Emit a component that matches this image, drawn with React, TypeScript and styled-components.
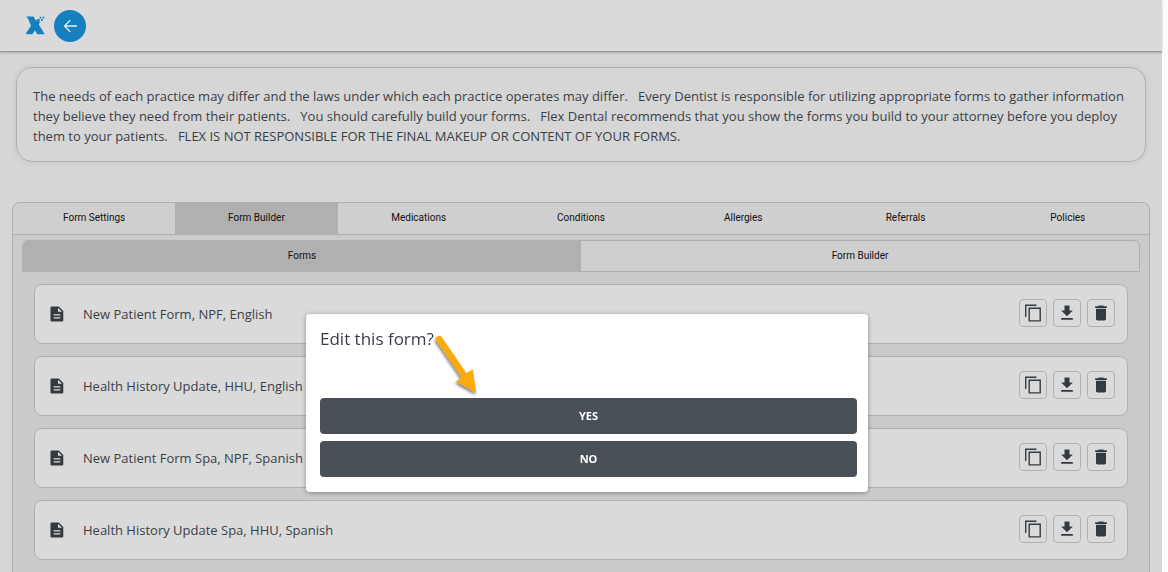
import React from "react";
import styled, { createGlobalStyle } from "styled-components";
import { MdDelete, MdDownload } from "react-icons/md";

const textFont = '"Segoe UI", "Open Sans", "Noto Sans", sans-serif';

const GlobalStyle = createGlobalStyle`
  *, *::before, *::after { box-sizing: border-box; }
  body {
    margin: 0;
    background: #fbfbfb;
    color: #3a3f47;
    font-family: ${textFont};
  }
  button { font: inherit; color: inherit; cursor: pointer; }
`;

const Page = styled.div`
  display: flex;
  flex-direction: column;
  min-height: 100vh;
  margin-right: 6px;
  background: #d6d6d6;
`;

const Header = styled.header`
  display: flex;
  align-items: center;
  gap: 9px;
  height: 52px;
  padding-left: 26px;
  background: #dadada;
  border-bottom: 1px solid #999999;
  box-shadow: 0 1px 2px rgba(0, 0, 0, 0.2);
`;

const BackButton = styled.button`
  display: grid;
  place-items: center;
  width: 32px;
  height: 32px;
  padding: 0;
  border: 0;
  border-radius: 50%;
  background: #1480bf;
`;

const Disclaimer = styled.p`
  margin: 15px 16px 40px;
  padding: 18px 16px 15px;
  border: 1px solid #b0b0b0;
  border-radius: 16px;
  box-shadow: 0 0 6px rgba(0, 0, 0, 0.08);
  font-size: 13px;
  line-height: 20px;
`;

const Panel = styled.main`
  flex: 1;
  margin: 0 12px;
  border: 1px solid #b0b0b0;
  border-bottom: 0;
  border-radius: 8px 8px 0 0;
  background: #cbcbcb;
  overflow: hidden;
`;

const TabBar = styled.nav<{ $nested?: boolean }>`
  display: flex;
  height: 32px;
  margin: ${(p) => (p.$nested ? "5px 9px 12px" : "0")};
  border: solid #b0b0b0;
  border-width: ${(p) => (p.$nested ? "1px" : "0 0 1px")};
  border-radius: ${(p) => (p.$nested ? "6px 6px 0 0" : "0")};
  background: #cfcfcf;
  overflow: hidden;
`;

const Tab = styled.button<{ $active?: boolean }>`
  flex: 1 1 0;
  padding: 0 0 1px;
  border: 0;
  background: ${(p) => (p.$active ? "#b0b0b0" : "transparent")};
  color: #111111;
  font-family: Roboto, sans-serif;
  font-size: 10px;
  line-height: 12px;
`;

const FormList = styled.ul`
  display: flex;
  flex-direction: column;
  gap: 12px;
  margin: 0;
  padding: 0 21px 12px;
  list-style: none;
`;

const FormRow = styled.li`
  display: flex;
  align-items: center;
  height: 60px;
  padding: 0 12px 0 15px;
  border: 1px solid #b0b0b0;
  border-radius: 8px;
  background: #dadada;
  color: #3a3f47;
`;

const FormName = styled.span`
  flex: 1;
  margin-left: 19px;
  font-size: 13px;
  line-height: 20px;
`;

const Actions = styled.div`
  display: flex;
  gap: 6px;
  margin-bottom: 2px;
`;

const IconButton = styled.button`
  display: grid;
  place-items: center;
  width: 28px;
  height: 28px;
  padding: 0;
  border: 1px solid #b0b0b0;
  border-radius: 4px;
  background: transparent;
  color: #343a41;
`;

const Overlay = styled.div`
  position: fixed;
  inset: 0;
  display: flex;
  justify-content: center;
  align-items: flex-start;
  padding: 314px 0 0 6px;
`;

const Dialog = styled.section`
  position: relative;
  display: flex;
  flex-direction: column;
  gap: 7px;
  width: 562px;
  max-width: 90%;
  padding: 13px 11px 15px 14px;
  border-radius: 4px;
  background: #ffffff;
  box-shadow: 0 1px 5px rgba(0, 0, 0, 0.35);
`;

const DialogTitle = styled.h2`
  margin: 0 0 40px;
  font-size: 17px;
  font-weight: 400;
  line-height: 24px;
`;

const DialogButton = styled.button`
  height: 36px;
  padding: 0 0 2px;
  border: 0;
  border-radius: 4px;
  background: #495057;
  color: #ffffff;
  font-size: 11px;
  font-weight: 700;
`;

const Pointer = styled.svg`
  position: absolute;
  left: 124px;
  top: 16px;
  pointer-events: none;
`;

const tabs = ["Form Settings", "Form Builder", "Medications", "Conditions", "Allergies", "Referrals", "Policies"];
const forms = [
  "New Patient Form, NPF, English",
  "Health History Update, HHU, English",
  "New Patient Form Spa, NPF, Spanish",
  "Health History Update Spa, HHU, Spanish",
];

const Logo = () => (
  <svg width="19" height="19" viewBox="0 0 19 19" fill="#1480bf" role="img" aria-label="Flex">
    <path d="M0.300 0.500H7.500L9.800 4.500 11.500 3 12.500 5.500 14.500 5 12.800 8.500 18.700 18.300H11.300L8.800 14.300 6.500 18.300H0.300V16.800L5 9.800 2.300 3.300z" />
    <path d="M12 3h1.800v1.800H12zM13.700 0.800h1.600v1.600h-1.600zM16.600 0.800h1.600v1.600h-1.600zM15 3h1.800v1.800H15z" />
  </svg>
);

const BackArrow = () => (
  <svg width="16" height="16" viewBox="0 0 16 16" fill="none" stroke="#e4eef4" strokeWidth="1.3">
    <path d="M15 8H2.500M8.200 2.200L2.500 8l5.700 5.800" />
  </svg>
);

const DocumentIcon = () => (
  <svg width="14" height="16" viewBox="0 0 14 16" fill="#343a41" aria-hidden="true">
    <path
      fillRule="evenodd"
      d="M1.500 0.500H8.800L13.300 5V14.500a1 1 0 0 1-1 1H1.500a1 1 0 0 1-1-1V1.500a1 1 0 0 1 1-1zM8 1.800V5.800H12zM3.700 8.300V9.500H10.300V8.300zM3.700 11.300V12.500H10.300V11.300z"
    />
  </svg>
);

const CopyIcon = () => (
  <svg width="18" height="18" viewBox="0 0 18 18" fill="none" stroke="#343a41" strokeWidth="1.4" aria-hidden="true">
    <path d="M1.700 13V1.200H12.500" />
    <path d="M5.200 4.200H16.200V16.900H5.200z" />
  </svg>
);

export default function App() {
  return (
    <>
      <GlobalStyle />
      <Page>
        <Header>
          <Logo />
          <BackButton aria-label="Back">
            <BackArrow />
          </BackButton>
        </Header>
        <Disclaimer>
          The needs of each practice may differ and the laws under which each practice operates may differ. &nbsp; Every
          Dentist is responsible for utilizing appropriate forms to gather information
          <br />
          they believe they need from their patients. &nbsp; You should carefully build your forms. &nbsp; Flex Dental
          recommends that you show the forms you build to your attorney before you deploy
          <br />
          them to your patients. &nbsp; FLEX IS NOT RESPONSIBLE FOR THE FINAL MAKEUP OR CONTENT OF YOUR FORMS.
        </Disclaimer>
        <Panel>
          <TabBar aria-label="Sections">
            {tabs.map((name) => (
              <Tab key={name} $active={name === "Form Builder"}>
                {name}
              </Tab>
            ))}
          </TabBar>
          <TabBar $nested aria-label="Form builder">
            <Tab $active>Forms</Tab>
            <Tab>Form Builder</Tab>
          </TabBar>
          <FormList>
            {forms.map((name) => (
              <FormRow key={name}>
                <DocumentIcon />
                <FormName>{name}</FormName>
                <Actions>
                  <IconButton aria-label={`Copy ${name}`}>
                    <CopyIcon />
                  </IconButton>
                  <IconButton aria-label={`Download ${name}`}>
                    <MdDownload size={20} />
                  </IconButton>
                  <IconButton aria-label={`Delete ${name}`}>
                    <MdDelete size={20} />
                  </IconButton>
                </Actions>
              </FormRow>
            ))}
          </FormList>
        </Panel>
      </Page>
      <Overlay>
        <Dialog role="dialog" aria-labelledby="dialog-title">
          <DialogTitle id="dialog-title">Edit this form?</DialogTitle>
          <DialogButton>YES</DialogButton>
          <DialogButton>NO</DialogButton>
          <Pointer width="60" height="72" viewBox="0 0 60 72" aria-hidden="true">
            <defs>
              <filter id="pointer-shadow" x="-30%" y="-30%" width="160%" height="160%">
                <feDropShadow dx="-1" dy="2" stdDeviation="1.500" floodOpacity="0.5" />
              </filter>
            </defs>
            <path
              d="M6.300 10.500a3.200 3.200 0 0 1 5.700-3L36.500 43.300l6.300-4 3.500 23.700-20.300-11.500 5.500-4z"
              fill="#f9ab0b"
              filter="url(#pointer-shadow)"
            />
          </Pointer>
        </Dialog>
      </Overlay>
    </>
  );
}
